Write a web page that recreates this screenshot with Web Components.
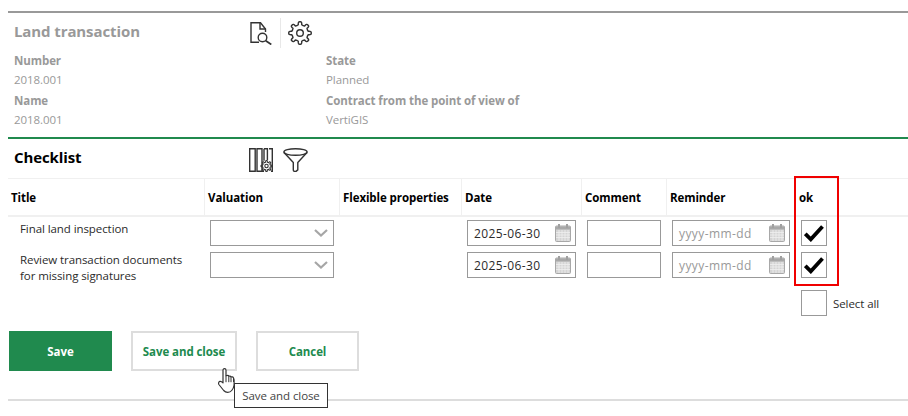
<!DOCTYPE html>
<html lang="en">
<head>
<meta charset="utf-8">
<title>Land transaction</title>
<style>
  html, body { margin: 0; padding: 0; background: #fff; min-height: 416px; }
  body { font: 11.5px "Open Sans", "Noto Sans", sans-serif; letter-spacing: -.08px; color: #2b2b2b; }
</style>
</head>
<body>
<land-page></land-page>
<script>
// rounded gear outline, same shape for the big one and the one in the columns icon
function gearPath(cx, cy, outer, inner, teeth = 8) {
  const pt = (r, a) => `${(cx + r * Math.cos(a)).toFixed(2)} ${(cy + r * Math.sin(a)).toFixed(2)}`;
  const step = Math.PI * 2 / teeth;
  let d = '';
  for (let i = 0; i < teeth; i++) {
    const a = i * step - Math.PI / 2;
    const w = step * .2;
    d += `${i ? 'L' : 'M'}${pt(inner, a - w * 1.3)}Q${pt(outer * 1.06, a - w * 1.1)} ${pt(outer, a)}Q${pt(outer * 1.06, a + w * 1.1)} ${pt(inner, a + w * 1.3)}`;
    d += `Q${pt(inner * .93, a + step / 2)} ${pt(inner, a + step - w * 1.3)}`;
  }
  return d + 'Z';
}

const icons = {
  docSearch: `<svg width="22" height="23" viewBox="0 0 22 23" fill="none" stroke="#333" stroke-width="1.400"><path d="M9 20.300H1V.8h9.500L15.500 7v3"/><path d="M10 1v6h5.500"/><circle cx="12.500" cy="15.500" r="4.300"/><path d="M15.700 18.700l5.600 3.800" stroke-width="1.700"/></svg>`,
  gear: `<svg width="24" height="24" viewBox="0 0 24 24" fill="none" stroke="#333" stroke-width="1.400" stroke-linejoin="round"><path d="${gearPath(12, 12, 11.200, 8.400)}"/><circle cx="12" cy="12" r="3.300"/></svg>`,
  columns: `<svg width="24" height="24" viewBox="0 0 24 24" fill="none" stroke="#333" stroke-width="1.400"><path d="M.7.7h5.500v22.600H.7zM8 .7h5v22.600H8zM15 .7h3.400v11.500M20 .7h3.300v22.600H22M15 .7v12"/><path d="M13 23.300h2"/><path stroke-width="1.100" d="${gearPath(17.500, 18, 5.500, 4)}"/><circle cx="17.500" cy="18" r="1.700" stroke-width="1.100"/></svg>`,
  funnel: `<svg width="25" height="24" viewBox="0 0 25 24" fill="none" stroke="#333" stroke-width="1.400" stroke-linejoin="round"><ellipse cx="12.500" cy="4" rx="11.600" ry="3.300"/><path d="M1 4.500L10.300 14.500v7.500c0 1 .8 1.400 1.500 1.400h1.200l1.800-1.500v-7.400L24 4.500"/></svg>`,
  chevron: `<svg width="14" height="8" viewBox="0 0 14 8" fill="none" stroke="#a6a6a6" stroke-width="2.200"><path d="M1 1l6 5.500L13 1"/></svg>`,
  calendar: `<svg width="16" height="18" viewBox="0 0 16 18"><rect x=".5" y="2" width="15" height="15.500" rx="1" fill="#d4d4d4" stroke="#a8a8a8"/><rect x="1" y="2.500" width="14" height="3" fill="#a8a8a8"/><rect x="3" y="0" width="2" height="4" fill="#a0a0a0"/><rect x="11" y="0" width="2" height="4" fill="#a0a0a0"/><path d="M1 8.500h14M1 11h14M1 13.500h14M4 6v11M7 6v11M10 6v11M13 6v11" stroke="#f0f0f0" stroke-width=".8"/></svg>`,
  check: `<svg width="20" height="17" viewBox="0 0 20 17" fill="none" stroke="#000" stroke-width="3.800"><path d="M1.300 8.800l5.500 5.500L18.500 1.500"/></svg>`,
  hand: `<svg width="18" height="25" viewBox="0 0 18 25"><path d="M6.500.7c1 0 1.500.7 1.500 1.600v5.400l1-.2c1-.2 1.600.2 1.800.8.800-.5 1.900-.2 2.200.7.900-.4 2.100-.1 2.500.9l.6 2V17c-.2 2-1.200 4-2.400 5.500-1 1.300-2.500 1.800-4 1.800-1.600 0-3-.7-4-1.800L.9 16.500c-.7-1-.2-2.800 1-3.100.9-.2 1.800.2 3.100 1.500V2.300C5 1.400 5.500.7 6.500.7z" fill="#fff" stroke="#333" stroke-width="1.200" stroke-linejoin="round"/><path d="M8 7.700v6.500M10.800 8.500v5.700M13 9.200v5M15.500 10v4" stroke="#333" stroke-width="1" fill="none"/></svg>`
};

// every element has the same shape, only the template differs
const define = (tag, template) => customElements.define(tag, class extends HTMLElement {
  constructor() {
    super();
    this.attachShadow({mode: 'open'});
    this.shadowRoot.innerHTML = typeof template === 'function' ? template(this) : template;
  }
});

define('app-icon', el => `<style>
    :host { display: inline-flex; line-height: 0; }
  </style>${icons[el.getAttribute('name')]}`);

define('info-field', el => `<style>
    :host { display: flex; flex-direction: column; color: #999; }
    b { font-weight: 700; height: 19px; line-height: 18px; }
    span { height: 21px; line-height: 18px; }
  </style>
  <b>${el.getAttribute('label')}</b>
  <span>${el.getAttribute('value')}</span>`);

define('record-header', `<style>
    :host {
      display: block;
      box-sizing: border-box;
      height: 128px;
      border-top: 2px solid #999;
      border-bottom: 2px solid #208a4e;
    }
    .top { display: flex; align-items: center; height: 30px; padding: 5px 0 0 6px; }
    h1 { margin: 0; padding-bottom: 4px; width: 236px; font-size: 15px; font-weight: 700; letter-spacing: -.1px; color: #999; }
    .sep { width: 1px; height: 30px; background: #e8e8e8; margin: 0 7px 0 8px; }
    .fields { display: grid; grid-template-columns: 312px 1fr; padding: 4px 0 0 6px; }
  </style>
  <div class="top">
    <h1>Land transaction</h1>
    <app-icon name="docSearch"></app-icon>
    <div class="sep"></div>
    <app-icon name="gear"></app-icon>
  </div>
  <div class="fields">
    <info-field label="Number" value="2018.001"></info-field>
    <info-field label="State" value="Planned"></info-field>
    <info-field label="Name" value="2018.001"></info-field>
    <info-field label="Contract from the point of view of" value="VertiGIS"></info-field>
  </div>`);

define('select-field', `<style>
    :host { display: flex; box-sizing: border-box; height: 26px; width: 124px; border: 1px solid #999; align-items: center; justify-content: flex-end; padding-right: 5px; }
  </style><app-icon name="chevron"></app-icon>`);

define('date-field', el => `<style>
    :host { display: flex; box-sizing: border-box; height: 26px; border: 1px solid #999; align-items: center; justify-content: space-between; padding: 0 4px 0 6px; font-size: 12px; letter-spacing: .4px; }
    .ph { color: #999; }
  </style><span class="${el.hasAttribute('value') ? '' : 'ph'}">${el.getAttribute('value') || 'yyyy-mm-dd'}</span><app-icon name="calendar"></app-icon>`);

define('text-field', `<style>
    :host { display: block; box-sizing: border-box; height: 26px; width: 74px; border: 1px solid #999; }
  </style>`);

define('check-box', el => `<style>
    :host { display: flex; box-sizing: border-box; width: 26px; height: 26px; border: 1px solid #999; align-items: center; justify-content: center; }
  </style>${el.hasAttribute('checked') ? icons.check : ''}`);

define('check-list', `<style>
    :host { display: block; position: relative; }
    h2 { margin: 0; height: 36px; padding: 3px 0 0 6px; display: flex; align-items: center; font-size: 15px; font-weight: 700; letter-spacing: -.1px; color: #000; border-bottom: 1px solid #f0f0f0; }
    h2 span { width: 235px; padding-bottom: 6px; }
    h2 app-icon + app-icon { margin-left: 10px; }
    .grid { display: grid; grid-template-columns: 196px 135px 122px 120px 85px 129px 1fr; }
    .th { height: 36px; line-height: 37px; font-weight: 700; color: #000; border-bottom: 2px solid #f0f0f0; border-left: 1px solid #f0f0f0; padding-left: 3px; }
    .th:first-child { border-left: 0; }
    .td { height: 26px; padding: 3px 0 3px 6px; }
    .title { line-height: 16px; padding-left: 12px; white-space: nowrap; }
    .title span { display: block; margin-top: 1px; }
    .title.two span { margin-top: 0; }
    date-field.d { width: 109px; }
    date-field.r { width: 118px; }
    .all { display: flex; align-items: center; gap: 6px; margin: 9px 0 0 793px; }
    .flag { position: absolute; left: 786px; top: 37px; width: 41px; height: 106px; border: 2px solid #f00000; pointer-events: none; }
  </style>
  <h2><span>Checklist</span><app-icon name="columns"></app-icon><app-icon name="funnel"></app-icon></h2>
  <div class="grid">
    <div class="th">Title</div><div class="th">Valuation</div><div class="th">Flexible properties</div><div class="th">Date</div><div class="th">Comment</div><div class="th">Reminder</div><div class="th">ok</div>

    <div class="td title"><span>Final land inspection</span></div>
    <div class="td"><select-field></select-field></div>
    <div class="td"></div>
    <div class="td"><date-field class="d" value="2025-06-30"></date-field></div>
    <div class="td"><text-field></text-field></div>
    <div class="td"><date-field class="r"></date-field></div>
    <div class="td"><check-box checked></check-box></div>

    <div class="td title two"><span>Review transaction documents<br>for missing signatures</span></div>
    <div class="td"><select-field></select-field></div>
    <div class="td"></div>
    <div class="td"><date-field class="d" value="2025-06-30"></date-field></div>
    <div class="td"><text-field></text-field></div>
    <div class="td"><date-field class="r"></date-field></div>
    <div class="td"><check-box checked></check-box></div>
  </div>
  <div class="all"><check-box></check-box><span>Select all</span></div>
  <div class="flag"></div>`);

define('action-button', el => `<style>
    :host { display: flex; box-sizing: border-box; height: 40px; align-items: center; justify-content: center; font-weight: 700; color: #208a4e; border: 2px solid #ddd; background: #fff; }
    :host([primary]) { background: #208a4e; border-color: #208a4e; color: #fff; }
  </style><slot></slot>`);

define('tool-tip', `<style>
    :host { position: absolute; left: 226px; top: 52px; box-sizing: border-box; width: 94px; height: 25px; border: 1px solid #333; background: #fff; display: flex; align-items: center; justify-content: center; color: #444; }
  </style><slot></slot>`);

define('button-bar', `<style>
    :host { display: flex; position: relative; gap: 19px; padding: 0 0 28px 1px; border-bottom: 2px solid #ddd; margin-top: 15px; }
    ::slotted(action-button) { width: 103px; }
    ::slotted(.wide) { width: 106px; }
    .cursor { position: absolute; left: 210px; top: 37px; line-height: 0; }
  </style><slot></slot><span class="cursor"><app-icon name="hand"></app-icon></span>`);

define('land-page', `<style>
    :host { display: block; padding: 11px 0 0 8px; }
  </style>
  <record-header></record-header>
  <check-list></check-list>
  <button-bar>
    <action-button primary>Save</action-button>
    <action-button class="wide">Save and close</action-button>
    <action-button>Cancel</action-button>
    <tool-tip>Save and close</tool-tip>
  </button-bar>`);
</script>
</body>
</html>
